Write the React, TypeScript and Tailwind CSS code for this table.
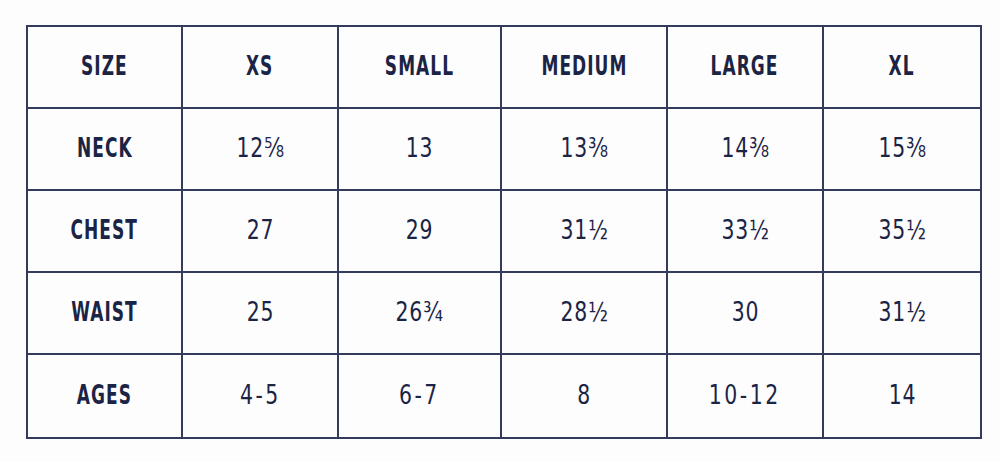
const COLS = ["w-[155px]", "w-[156px]", "w-[163px]", "w-[166px]", "w-[156px]", "w-[158px]"];

const HEAD = ["SIZE", "XS", "SMALL", "MEDIUM", "LARGE", "XL"];

const ROWS: [string, string[]][] = [
  ["NECK", ["12⅝", "13", "13⅜", "14⅜", "15⅜"]],
  ["CHEST", ["27", "29", "31½", "33½", "35½"]],
  ["WAIST", ["25", "26¾", "28½", "30", "31½"]],
  ["AGES", ["4-5", "6-7", "8", "10-12", "14"]],
];

function Label({ text }: { text: string }) {
  return (
    <span className="inline-block origin-center scale-x-[0.7] font-bold tracking-[1.5px] text-[27px] leading-none">
      {text}
    </span>
  );
}

function Value({ text }: { text: string }) {
  const m = text.match(/^(\d+)([⅝⅜½¾])$/);
  const dash = text.includes("-");
  return (
    <span
      className={
        "inline-block origin-center scale-x-[0.84] text-[27px] leading-none " +
        (dash ? "tracking-[3px]" : "tracking-[1px]")
      }
    >
      {m ? (
        <>
          {m[1]}
          <span className="tracking-normal">{m[2]}</span>
        </>
      ) : (
        text
      )}
    </span>
  );
}

export default function App() {
  return (
    <div
      className="w-[1000px] h-[462px] bg-[#fdfdfd] pl-[26px] pt-[25px] text-[#1b2445]"
      style={{ fontFamily: "'DejaVu Sans Condensed', 'DejaVu Sans', sans-serif" }}
    >
      <table className="table-fixed border-collapse border-2 border-[#323b5a]">
        <colgroup>
          {COLS.map((c, i) => (
            <col key={i} className={c} />
          ))}
        </colgroup>
        <tbody>
          <tr className="h-[82px]">
            {HEAD.map((h) => (
              <td key={h} className="border-2 border-[#323b5a] p-0 text-center align-middle">
                <Label text={h} />
              </td>
            ))}
          </tr>
          {ROWS.map(([name, vals], ri) => (
            <tr key={name} className={ri === ROWS.length - 1 ? "h-[84px]" : "h-[82px]"}>
              <td className="border-2 border-[#323b5a] p-0 text-center align-middle">
                <Label text={name} />
              </td>
              {vals.map((v, i) => (
                <td key={i} className="border-2 border-[#323b5a] p-0 text-center align-middle">
                  <Value text={v} />
                </td>
              ))}
            </tr>
          ))}
        </tbody>
      </table>
    </div>
  );
}
